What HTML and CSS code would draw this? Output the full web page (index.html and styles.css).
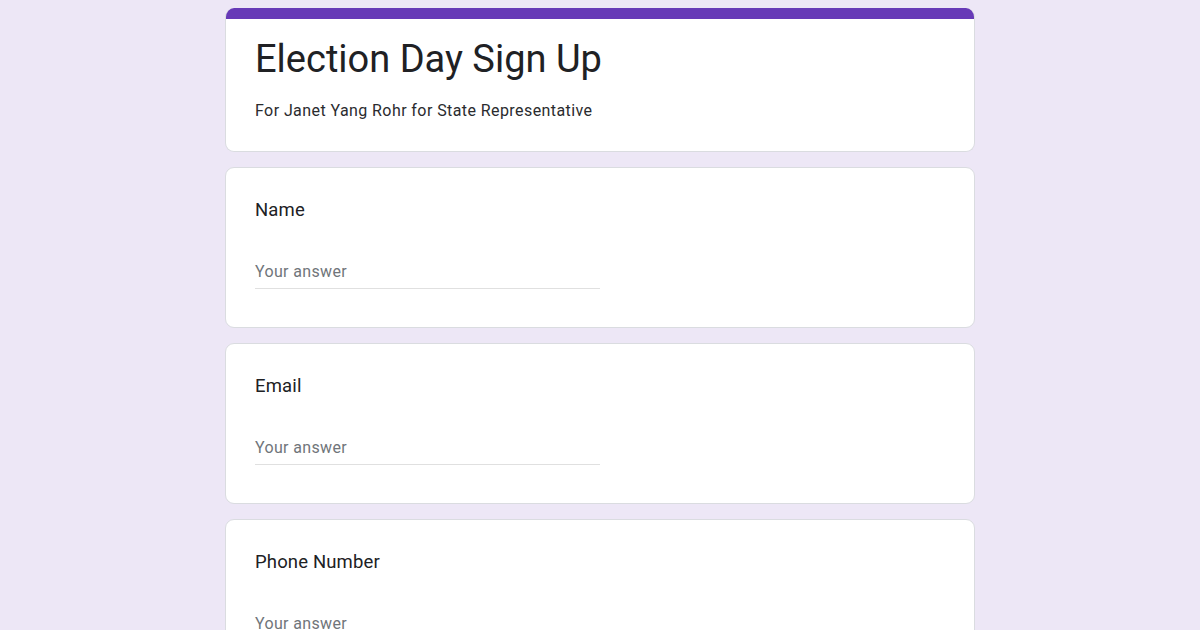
FILE: index.html
```html
<!DOCTYPE html>
<html>
<head>
<meta charset="utf-8">
<link rel="stylesheet" href="styles.css">
</head>
<body>
<div class="form">
  <div class="card header">
    <div class="accent"></div>
    <div class="header-body">
      <h1 class="title">Election Day Sign Up</h1>
      <p class="desc">For Janet Yang Rohr for State Representative</p>
    </div>
  </div>
  <div class="card question">
    <div class="label">Name</div>
    <div class="answer">Your answer</div>
  </div>
  <div class="card question">
    <div class="label">Email</div>
    <div class="answer">Your answer</div>
  </div>
  <div class="card question">
    <div class="label">Phone Number</div>
    <div class="answer">Your answer</div>
  </div>
</div>
</body>
</html>
```
FILE: styles.css
```css
html, body {
  margin: 0;
  padding: 0;
  background: #ede7f6;
  height: 630px;
  overflow: hidden;
}
.form {
  width: 750px;
  margin: 0 auto;
  padding-top: 8px;
  display: flex;
  flex-direction: column;
  gap: 15px;
}
.card {
  background: #fff;
  border: 1px solid #dadce0;
  border-radius: 9px;
  box-sizing: border-box;
  overflow: hidden;
}
.header {
  height: 144px;
  border-top: none;
}
.accent {
  height: 11px;
  background: #673ab7;
}
.header-body {
  padding: 16px 29px 0;
}
.title {
  margin: 0;
  font-family: "Roboto", sans-serif;
  font-weight: 400;
  font-size: 38px;
  line-height: 48px;
  color: #202124;
  letter-spacing: 0;
}
.desc {
  margin: 18px 0 0;
  font-family: "Roboto", sans-serif;
  font-size: 16px;
  line-height: 20px;
  letter-spacing: 0.42px;
  color: #2a2b2e;
}
.question {
  height: 161px;
  padding: 30px 29px 0;
}
.label {
  font-family: "Roboto", sans-serif;
  font-size: 18.5px;
  line-height: 24px;
  letter-spacing: 0.15px;
  color: #202124;
}
.answer {
  margin-top: 40px;
  width: 345px;
  font-family: "Roboto", sans-serif;
  font-size: 16px;
  line-height: 20px;
  letter-spacing: 0.35px;
  color: #70757a;
  padding-bottom: 6px;
  border-bottom: 1px solid #e0e0e0;
}
```
